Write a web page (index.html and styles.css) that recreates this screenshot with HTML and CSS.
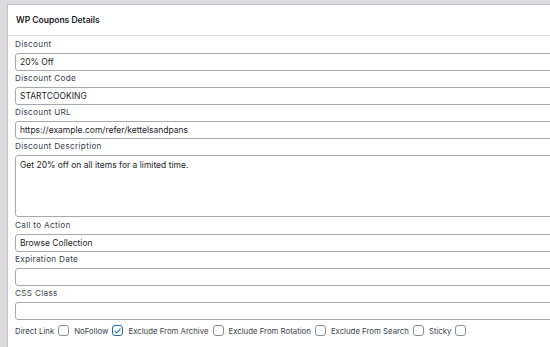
FILE: index.html
```html
<!DOCTYPE html>
<html>
<head>
<meta charset="utf-8">
<link rel="stylesheet" href="styles.css">
</head>
<body>
<div class="panel">
  <div class="panel-header">WP Coupons Details</div>
  <div class="panel-body">
    <div class="field">
      <label class="label">Discount</label>
      <div class="input">20% Off</div>
    </div>
    <div class="field">
      <label class="label">Discount Code</label>
      <div class="input">STARTCOOKING</div>
    </div>
    <div class="field">
      <label class="label">Discount URL</label>
      <div class="input">https://example.com/refer/kettelsandpans</div>
    </div>
    <div class="field">
      <label class="label">Discount Description</label>
      <div class="input textarea">Get 20% off on all items for a limited time.</div>
    </div>
    <div class="field">
      <label class="label">Call to Action</label>
      <div class="input">Browse Collection</div>
    </div>
    <div class="field">
      <label class="label">Expiration Date</label>
      <div class="input"></div>
    </div>
    <div class="field">
      <label class="label">CSS Class</label>
      <div class="input"></div>
    </div>
    <div class="checks">
      <span class="check">Direct Link <span class="box"></span></span>
      <span class="check">NoFollow <span class="box checked"><svg viewBox="0 0 12 12" width="12" height="12"><path d="M2.6 6.2 L5 8.6 L9.6 3.2" fill="none" stroke="#2271b1" stroke-width="1.4" stroke-linecap="round" stroke-linejoin="round"/></svg></span></span>
      <span class="check">Exclude From Archive <span class="box"></span></span>
      <span class="check">Exclude From Rotation <span class="box"></span></span>
      <span class="check">Exclude From Search <span class="box"></span></span>
      <span class="check">Sticky <span class="box"></span></span>
    </div>
  </div>
</div>
</body>
</html>
```
FILE: styles.css
```css
html, body {
  margin: 0;
  padding: 0;
  overflow: hidden;
  background: #dcdcde;
  font-family: "Inter", "Noto Sans", sans-serif;
  color: #1d2327;
}
body {
  height: 347px;
  padding: 4px 0 0 7px;
  box-sizing: border-box;
}
.panel {
  width: 600px;
  height: 400px;
  background: #fff;
  border-top: 1px solid #c3c4c7;
  border-left: 1px solid #c3c4c7;
}
.panel-header {
  height: 30px;
  padding-left: 8px;
  display: flex;
  align-items: center;
  font-size: 8.5px;
  font-weight: 600;
  border-bottom: 1px solid #dcdcde;
}
.panel-body {
  padding: 1px 0 0 7px;
}
.field {
  display: flex;
  flex-direction: column;
}
.label {
  font-size: 8.2px;
  letter-spacing: 0.3px;
  line-height: 14px;
  margin-bottom: 2px;
  color: #3c434a;
}
.input {
  height: 18px;
  box-sizing: border-box;
  border: 1px solid #a7aaad;
  border-radius: 3px;
  padding: 0 4px;
  font-size: 8.5px;
  line-height: 16px;
  color: #1d2327;
}
.textarea {
  height: 62px;
  padding-top: 1px;
  margin-bottom: 1px;
}
.checks {
  display: flex;
  align-items: center;
  gap: 5px;
  margin-top: 5px;
  font-size: 7.8px;
  color: #3c434a;
}
.check {
  display: inline-flex;
  align-items: center;
  gap: 4px;
}
.box {
  width: 11px;
  height: 11px;
  box-sizing: border-box;
  border: 1px solid #8c8f94;
  border-radius: 3px;
  display: inline-flex;
  align-items: center;
  justify-content: center;
}
.box.checked {
  border-color: #2271b1;
}
.box svg {
  width: 10px;
  height: 10px;
}
```
